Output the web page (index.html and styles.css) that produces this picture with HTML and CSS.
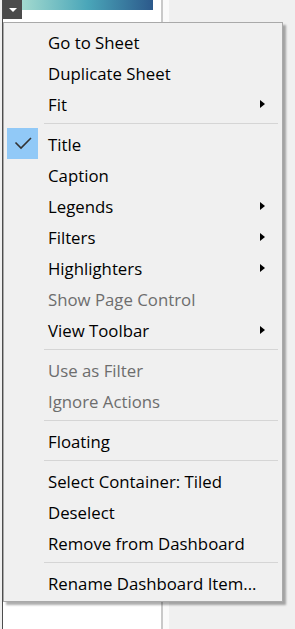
FILE: index.html
```html
<!DOCTYPE html>
<html lang="en">
<head>
    <meta charset="UTF-8">
    <meta name="viewport" content="width=device-width, initial-scale=1.0">
    <title>Dashboard item menu</title>
    <link rel="stylesheet" href="styles.css">
</head>
<body>
    <div class="dashboard">
        <div class="edge"></div>
        <div class="sheet">
            <div class="legend-row">
                <div class="legend-btn"><span class="down"></span></div>
                <div class="legend-ramp"></div>
            </div>
            <div class="legend-labels">
                <span>0.557</span>
                <span>40.571</span>
            </div>
        </div>
        <div class="gutter"></div>
        <div class="pane"></div>
    </div>

    <div class="context-menu">
        <div class="item"><span class="check"></span><span class="label">Go to Sheet</span></div>
        <div class="item"><span class="check"></span><span class="label">Duplicate Sheet</span></div>
        <div class="item"><span class="check"></span><span class="label">Fit</span><span class="arrow"></span></div>
        <div class="separator"></div>
        <div class="item"><span class="check checked"><svg width="31" height="31" viewBox="0 0 31 31"><polyline points="8.5,14.5 14,20 24,10" fill="none" stroke="#333" stroke-width="1.6"/></svg></span><span class="label">Title</span></div>
        <div class="item"><span class="check"></span><span class="label">Caption</span></div>
        <div class="item"><span class="check"></span><span class="label">Legends</span><span class="arrow"></span></div>
        <div class="item"><span class="check"></span><span class="label">Filters</span><span class="arrow"></span></div>
        <div class="item"><span class="check"></span><span class="label">Highlighters</span><span class="arrow"></span></div>
        <div class="item disabled"><span class="check"></span><span class="label">Show Page Control</span></div>
        <div class="item"><span class="check"></span><span class="label">View Toolbar</span><span class="arrow"></span></div>
        <div class="separator"></div>
        <div class="item disabled"><span class="check"></span><span class="label">Use as Filter</span></div>
        <div class="item disabled"><span class="check"></span><span class="label">Ignore Actions</span></div>
        <div class="separator"></div>
        <div class="item"><span class="check"></span><span class="label">Floating</span></div>
        <div class="separator"></div>
        <div class="item"><span class="check"></span><span class="label">Select Container: Tiled</span></div>
        <div class="item"><span class="check"></span><span class="label">Deselect</span></div>
        <div class="item"><span class="check"></span><span class="label">Remove from Dashboard</span></div>
        <div class="separator"></div>
        <div class="item"><span class="check"></span><span class="label">Rename Dashboard Item...</span></div>
    </div>
</body>
</html>
```

FILE: styles.css
```css
body {
    margin: 0;
    height: 629px;
    overflow: hidden;
    background: #f0f0f0;
    font-family: 'Open Sans', 'Noto Sans', sans-serif;
}
.dashboard {
    display: flex;
    height: 629px;
}
.edge {
    width: 2px;
    background: #f0f0f0;
}
.sheet {
    width: 158px;
    background: #fff;
    border-left: 1px solid #4d4d4d;
    border-right: 2px solid #c9c9c9;
}
.legend-row {
    display: flex;
}
.legend-btn {
    width: 19px;
    height: 19px;
    background: #4b4b4b;
    display: flex;
    justify-content: center;
    padding-top: 8px;
    box-sizing: border-box;
}
.down {
    width: 0;
    height: 0;
    border-left: 4px solid transparent;
    border-right: 4px solid transparent;
    border-top: 4px solid #fff;
}
.legend-ramp {
    width: 131px;
    height: 10px;
    background: linear-gradient(to right, #a3dacf, #4aa6b9 50%, #2c598b);
}
/* the menu covers the lower part of the labels */
.legend-labels {
    display: flex;
    justify-content: space-between;
    width: 131px;
    margin-left: 19px;
    margin-top: 7px;
    font-size: 16.8px;
    line-height: 12px;
    color: #222;
}
.gutter {
    width: 6px;
    background: #fafafa;
}
.pane {
    flex: 1;
    background: #f0f0f0;
}
.context-menu {
    position: absolute;
    left: 3px;
    top: 22px;
    width: 278px;
    padding: 3px 0;
    background: #f0f0f0;
    border: 1px solid #a9a9a9;
    box-shadow: 3px 3px 2px rgba(0, 0, 0, 0.32);
}
.item {
    display: flex;
    align-items: center;
    height: 31px;
    padding-left: 3px;
    font-size: 16.8px;
    color: #000;
}
.item.disabled {
    color: #6d6d6d;
}
.check {
    width: 31px;
    height: 31px;
    flex: none;
}
.check.checked {
    background: #91c9f7;
}
.check svg {
    display: block;
}
.label {
    margin-left: 10px;
    padding-top: 2px;
}
.arrow {
    margin-left: auto;
    margin-right: 17px;
    width: 0;
    height: 0;
    border-top: 4.5px solid transparent;
    border-bottom: 4.5px solid transparent;
    border-left: 5px solid #000;
}
.separator {
    height: 1px;
    margin: 4px 4px 4px 40px;
    background: #d5d5d5;
}
```
